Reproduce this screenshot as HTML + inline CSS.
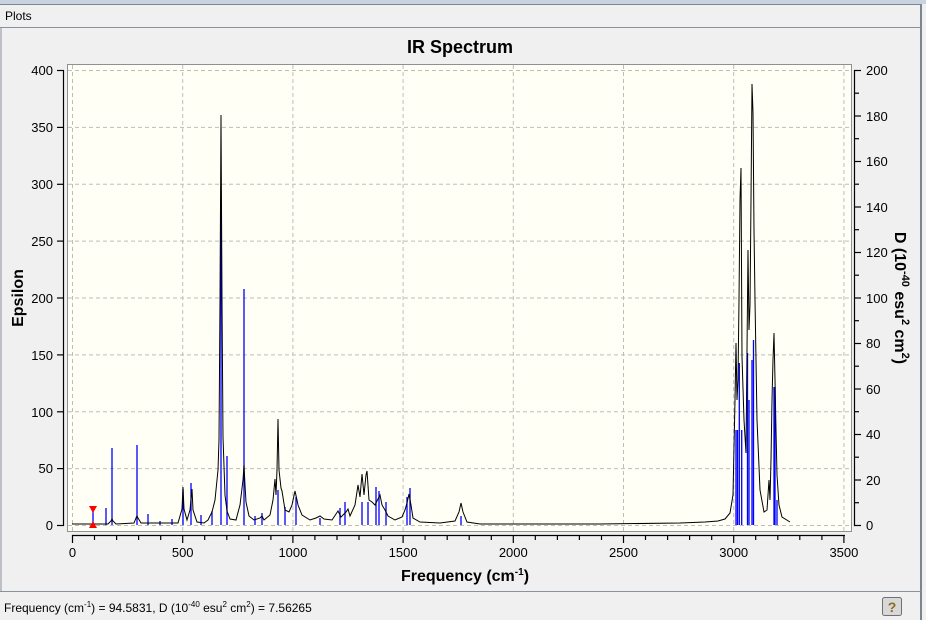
<!DOCTYPE html>
<html><head><meta charset="utf-8"><style>
html,body{margin:0;padding:0;width:926px;height:620px;overflow:hidden;background:#f0f0f0;font-family:"Liberation Sans",sans-serif;}
</style></head><body>
<svg width="926" height="620" xmlns="http://www.w3.org/2000/svg" font-family="Liberation Sans, sans-serif">
<rect x="0" y="0" width="926" height="620" fill="#f0f0f0"/>
<rect x="0" y="0" width="926" height="4" fill="#c9d3df"/>
<line x1="0" y1="4.5" x2="922" y2="4.5" stroke="#7a8594"/>
<line x1="921" y1="4" x2="921" y2="620" stroke="#7a8594" stroke-width="2"/>
<text x="5" y="20" font-size="12" fill="#000">Plots</text>
<line x1="0" y1="27.5" x2="921" y2="27.5" stroke="#8a929c"/>
<line x1="1" y1="27" x2="1" y2="592" stroke="#8a929c"/>
<line x1="0" y1="591.5" x2="921" y2="591.5" stroke="#8a929c"/>
<!-- plot area -->
<rect x="67.5" y="64.5" width="784" height="467" fill="#fffff5" stroke="#8c9198"/>
<g stroke="#bdbdbd" stroke-dasharray="4,3" stroke-width="1">
<line x1="72.5" y1="65" x2="72.5" y2="531"/><line x1="182.7" y1="65" x2="182.7" y2="531"/><line x1="292.9" y1="65" x2="292.9" y2="531"/><line x1="403.1" y1="65" x2="403.1" y2="531"/><line x1="513.3" y1="65" x2="513.3" y2="531"/><line x1="623.5" y1="65" x2="623.5" y2="531"/><line x1="733.7" y1="65" x2="733.7" y2="531"/><line x1="843.9" y1="65" x2="843.9" y2="531"/>
<line x1="68" y1="70.5" x2="851" y2="70.5"/><line x1="68" y1="127.4" x2="851" y2="127.4"/><line x1="68" y1="184.3" x2="851" y2="184.3"/><line x1="68" y1="241.1" x2="851" y2="241.1"/><line x1="68" y1="298" x2="851" y2="298"/><line x1="68" y1="354.9" x2="851" y2="354.9"/><line x1="68" y1="411.8" x2="851" y2="411.8"/><line x1="68" y1="468.6" x2="851" y2="468.6"/><line x1="68" y1="525.5" x2="851" y2="525.5"/>
</g>
<!-- blue sticks -->
<g stroke="#0000ff" stroke-width="1.3">
<line x1="106" y1="525" x2="106" y2="508"/><line x1="112" y1="525" x2="112" y2="448"/><line x1="137" y1="525" x2="137" y2="445"/><line x1="148" y1="525" x2="148" y2="514"/><line x1="160" y1="525" x2="160" y2="521"/><line x1="172" y1="525" x2="172" y2="519"/><line x1="183" y1="525" x2="183" y2="489"/><line x1="191" y1="525" x2="191" y2="483"/><line x1="201" y1="525" x2="201" y2="515"/><line x1="212" y1="525" x2="212" y2="511"/><line x1="221" y1="525" x2="221" y2="200"/><line x1="227" y1="525" x2="227" y2="456"/><line x1="244" y1="525" x2="244" y2="289"/><line x1="255" y1="525" x2="255" y2="516"/><line x1="262" y1="525" x2="262" y2="513"/><line x1="278" y1="525" x2="278" y2="490"/><line x1="285" y1="525" x2="285" y2="507"/><line x1="296" y1="525" x2="296" y2="497"/><line x1="320" y1="525" x2="320" y2="518"/><line x1="340" y1="525" x2="340" y2="508"/><line x1="345" y1="525" x2="345" y2="502"/><line x1="362" y1="525" x2="362" y2="502"/><line x1="368" y1="525" x2="368" y2="502"/><line x1="376" y1="525" x2="376" y2="487"/><line x1="379" y1="525" x2="379" y2="491"/><line x1="386" y1="525" x2="386" y2="502"/><line x1="407" y1="525" x2="407" y2="497"/><line x1="410" y1="525" x2="410" y2="488"/><line x1="461" y1="525" x2="461" y2="516"/>
<line x1="736" y1="525" x2="736" y2="430"/><line x1="737.5" y1="525" x2="737.5" y2="430"/><line x1="739.3" y1="525" x2="739.3" y2="363"/><line x1="741.7" y1="525" x2="741.7" y2="430"/><line x1="747.5" y1="525" x2="747.5" y2="353"/><line x1="749" y1="525" x2="749" y2="400"/><line x1="752" y1="525" x2="752" y2="360"/><line x1="753.5" y1="525" x2="753.5" y2="340"/><line x1="774" y1="525" x2="774" y2="387"/><line x1="775" y1="525" x2="775" y2="387"/><line x1="777" y1="525" x2="777" y2="500"/>
</g>
<!-- black spectrum -->
<polyline fill="none" stroke="#000" stroke-width="1" points="72,524 108,524 111,521 112,519 113,521 116,524 134,523 136,518 137,516 138,518 141,523 178,523 182,509 183,487 184,509 187,520 190,510 192,489 193,510 197,522 204,523 208,520 212,512 215,500 218,470 219,440 220,300 221,115 222,300 223,437 225,495 227,511 230,519 236,520 240,505 243,480 244,465 245,485 246,502 249,516 254,520 260,518 262,516 264,520 270,515 273,500 275,479 276,495 277,470 278,419 279,470 281,488 282,491 285,510 289,512 292,505 295,491 297,500 298,505 302,515 310,520 316,518 320,516 324,519 332,520 336,514 338,511 341,517 346,512 348,509 350,516 355,505 358,485 360,497 362,474 364,495 366,475 367,471 369,500 372,502 375,505 379,497 380,495 382,505 385,510 388,516 395,520 402,517 405,510 407,503 409,494 411,505 413,518 420,522 440,523 455,521 459,512 461,503 463,512 467,522 480,524 600,524 680,523 705,522 718,521 725,519 730,513 733,495 735,400 736,343 737,400 738,380 739,300 740,200 741,168 742,357 744,420 746,453 747,350 748,250 749,330 750,305 751,200 752,84 753,113 754,230 755,300 757,420 760,490 764,512 767,510 769,480 770,500 771,460 772,400 773,360 774,333 775,380 776,430 777,475 779,505 782,517 790,522"/>
<!-- red marker -->
<line x1="93" y1="509" x2="93" y2="524" stroke="#0000ff" stroke-width="1.3"/>
<polygon points="89,506 97,506 93,513" fill="#ff0000"/>
<polygon points="89,528 97,528 93,521" fill="#ff0000"/>
<!-- left axis -->
<g stroke="#000" stroke-width="1.2">
<line x1="63.5" y1="70" x2="63.5" y2="526"/>
<line x1="57" y1="70.5" x2="64" y2="70.5"/><line x1="57" y1="127.4" x2="64" y2="127.4"/><line x1="57" y1="184.3" x2="64" y2="184.3"/><line x1="57" y1="241.1" x2="64" y2="241.1"/><line x1="57" y1="298" x2="64" y2="298"/><line x1="57" y1="354.9" x2="64" y2="354.9"/><line x1="57" y1="411.8" x2="64" y2="411.8"/><line x1="57" y1="468.6" x2="64" y2="468.6"/><line x1="57" y1="525.5" x2="64" y2="525.5"/>
</g>
<g font-size="13" text-anchor="end" fill="#000">
<text x="53" y="75">400</text><text x="53" y="132">350</text><text x="53" y="189">300</text><text x="53" y="246">250</text><text x="53" y="303">200</text><text x="53" y="360">150</text><text x="53" y="417">100</text><text x="53" y="473">50</text><text x="53" y="530">0</text>
</g>
<!-- right axis -->
<g stroke="#000" stroke-width="1.2">
<line x1="854.5" y1="70" x2="854.5" y2="526"/>
<line x1="854" y1="70.5" x2="861" y2="70.5"/><line x1="854" y1="93.2" x2="859" y2="93.2"/><line x1="854" y1="116" x2="861" y2="116"/><line x1="854" y1="138.7" x2="859" y2="138.7"/><line x1="854" y1="161.5" x2="861" y2="161.5"/><line x1="854" y1="184.2" x2="859" y2="184.2"/><line x1="854" y1="207" x2="861" y2="207"/><line x1="854" y1="229.7" x2="859" y2="229.7"/><line x1="854" y1="252.5" x2="861" y2="252.5"/><line x1="854" y1="275.2" x2="859" y2="275.2"/><line x1="854" y1="298" x2="861" y2="298"/><line x1="854" y1="320.7" x2="859" y2="320.7"/><line x1="854" y1="343.5" x2="861" y2="343.5"/><line x1="854" y1="366.2" x2="859" y2="366.2"/><line x1="854" y1="389" x2="861" y2="389"/><line x1="854" y1="411.7" x2="859" y2="411.7"/><line x1="854" y1="434.5" x2="861" y2="434.5"/><line x1="854" y1="457.2" x2="859" y2="457.2"/><line x1="854" y1="480" x2="861" y2="480"/><line x1="854" y1="502.7" x2="859" y2="502.7"/><line x1="854" y1="525.5" x2="861" y2="525.5"/>
</g>
<g font-size="13" fill="#000">
<text x="866" y="75">200</text><text x="866" y="121">180</text><text x="866" y="166">160</text><text x="866" y="212">140</text><text x="866" y="257">120</text><text x="866" y="303">100</text><text x="866" y="348">80</text><text x="866" y="394">60</text><text x="866" y="439">40</text><text x="866" y="485">20</text><text x="866" y="530">0</text>
</g>
<!-- bottom axis -->
<g stroke="#000" stroke-width="1.2">
<line x1="72" y1="535.5" x2="845" y2="535.5"/>
<line x1="72.5" y1="535" x2="72.5" y2="543"/><line x1="94.5" y1="535" x2="94.5" y2="540"/><line x1="116.6" y1="535" x2="116.6" y2="540"/><line x1="138.6" y1="535" x2="138.6" y2="540"/><line x1="160.7" y1="535" x2="160.7" y2="540"/><line x1="182.7" y1="535" x2="182.7" y2="543"/><line x1="204.7" y1="535" x2="204.7" y2="540"/><line x1="226.8" y1="535" x2="226.8" y2="540"/><line x1="248.8" y1="535" x2="248.8" y2="540"/><line x1="270.9" y1="535" x2="270.9" y2="540"/><line x1="292.9" y1="535" x2="292.9" y2="543"/><line x1="314.9" y1="535" x2="314.9" y2="540"/><line x1="337" y1="535" x2="337" y2="540"/><line x1="359" y1="535" x2="359" y2="540"/><line x1="381.1" y1="535" x2="381.1" y2="540"/><line x1="403.1" y1="535" x2="403.1" y2="543"/><line x1="425.1" y1="535" x2="425.1" y2="540"/><line x1="447.2" y1="535" x2="447.2" y2="540"/><line x1="469.2" y1="535" x2="469.2" y2="540"/><line x1="491.3" y1="535" x2="491.3" y2="540"/><line x1="513.3" y1="535" x2="513.3" y2="543"/><line x1="535.3" y1="535" x2="535.3" y2="540"/><line x1="557.4" y1="535" x2="557.4" y2="540"/><line x1="579.4" y1="535" x2="579.4" y2="540"/><line x1="601.5" y1="535" x2="601.5" y2="540"/><line x1="623.5" y1="535" x2="623.5" y2="543"/><line x1="645.5" y1="535" x2="645.5" y2="540"/><line x1="667.6" y1="535" x2="667.6" y2="540"/><line x1="689.6" y1="535" x2="689.6" y2="540"/><line x1="711.7" y1="535" x2="711.7" y2="540"/><line x1="733.7" y1="535" x2="733.7" y2="543"/><line x1="755.7" y1="535" x2="755.7" y2="540"/><line x1="777.8" y1="535" x2="777.8" y2="540"/><line x1="799.8" y1="535" x2="799.8" y2="540"/><line x1="821.9" y1="535" x2="821.9" y2="540"/><line x1="843.9" y1="535" x2="843.9" y2="543"/>
</g>
<g font-size="13" text-anchor="middle" fill="#000">
<text x="72.5" y="557">0</text><text x="182.7" y="557">500</text><text x="292.9" y="557">1000</text><text x="403.1" y="557">1500</text><text x="513.3" y="557">2000</text><text x="623.5" y="557">2500</text><text x="733.7" y="557">3000</text><text x="843.9" y="557">3500</text>
</g>
<!-- titles -->
<text x="460" y="53" font-size="18" font-weight="bold" text-anchor="middle">IR Spectrum</text>
<text x="465" y="581" font-size="16" font-weight="bold" text-anchor="middle">Frequency (cm<tspan font-size="10" dy="-6">-1</tspan><tspan dy="6">)</tspan></text>
<text transform="translate(23,298) rotate(-90)" font-size="16" font-weight="bold" text-anchor="middle">Epsilon</text>
<text transform="translate(895,298) rotate(90)" font-size="16" font-weight="bold" text-anchor="middle">D (10<tspan font-size="11" dy="-7">-40</tspan><tspan dy="7"> esu</tspan><tspan font-size="11" dy="-7">2</tspan><tspan dy="7"> cm</tspan><tspan font-size="11" dy="-7">2</tspan><tspan dy="7">)</tspan></text>
<!-- status -->
<text x="4" y="612" font-size="12">Frequency (cm<tspan font-size="8" dy="-5">-1</tspan><tspan dy="5">) = 94.5831, D (10</tspan><tspan font-size="8" dy="-5">-40</tspan><tspan dy="5"> esu</tspan><tspan font-size="8" dy="-5">2</tspan><tspan dy="5"> cm</tspan><tspan font-size="8" dy="-5">2</tspan><tspan dy="5">) = 7.56265</tspan></text>
<rect x="882.5" y="597.5" width="19" height="18" rx="2" fill="#d8d8d8" stroke="#707070"/>
<text x="892" y="612" font-size="14" font-weight="bold" text-anchor="middle" fill="#8a6d1c">?</text>
</svg>
</body></html>
